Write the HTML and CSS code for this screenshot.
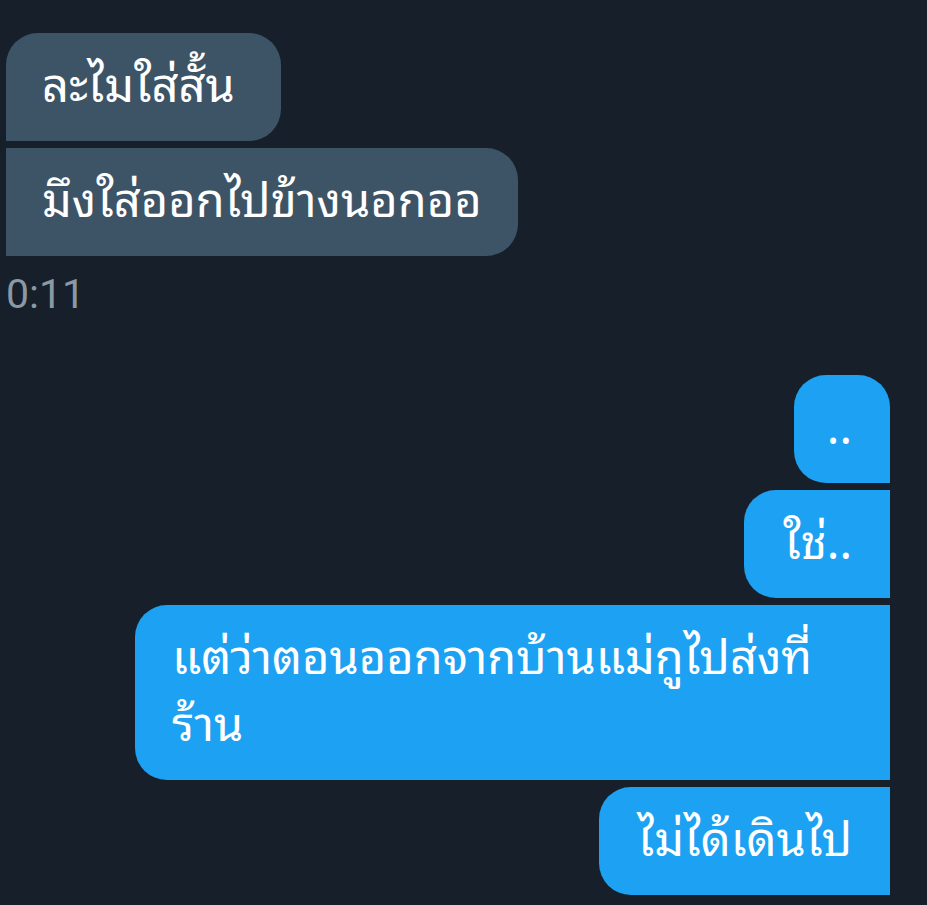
FILE: index.html
```html
<!DOCTYPE html>
<html lang="th">
<head>
<meta charset="utf-8">
<title>DM</title>
<link rel="stylesheet" href="styles.css">
</head>
<body>
<div class="chat">
  <div class="group in">
    <div class="bubble first">ละไมใส่สั้น</div>
    <div class="bubble last">มึงใส่ออกไปข้างนอกออ</div>
    <div class="time">0:11</div>
  </div>
  <div class="group out">
    <div class="bubble first">..</div>
    <div class="bubble">ใช่..</div>
    <div class="bubble wide">แต่ว่าตอนออกจากบ้านแม่กูไปส่งที่<br>ร้าน</div>
    <div class="bubble">ไม่ได้เดินไป</div>
  </div>
</div>
</body>
</html>
```
FILE: styles.css
```css
html, body {
  margin: 0;
  padding: 0;
  background: #17202a;
}
body {
  width: 927px;
  height: 905px;
  overflow: hidden;
  font-family: Roboto, "Noto Sans Thai Looped", "Noto Sans Thai", sans-serif;
  color: #ffffff;
}
.chat {
  display: flex;
  flex-direction: column;
  padding: 33px 37px 0 6px;
}
.group {
  display: flex;
  flex-direction: column;
  gap: 7px;
}
.group.in {
  align-items: flex-start;
}
.group.out {
  align-items: flex-end;
  margin-top: 57px;
}
.bubble {
  font-family: "Noto Sans Thai Looped", Roboto, sans-serif;
  font-size: 47px;
  line-height: 67px;
  padding: 14px 46px 27px 36px;
}
.in .bubble {
  background: #3d5466;
  border-radius: 0 32px 32px 0;
}
.in .bubble.first {
  border-radius: 32px 32px 32px 0;
}
.in .bubble.last {
  padding-right: 36px;
}
.out .bubble {
  background: #1da1f2;
  border-radius: 32px 0 0 32px;
  padding-left: 39px;
  padding-right: 38px;
}
.out .bubble.first {
  border-radius: 32px 32px 0 32px;
  padding-left: 33px;
}
.bubble.wide {
  width: 755px;
  box-sizing: border-box;
  padding-left: 37px;
}
.time {
  font-family: Roboto, sans-serif;
  font-size: 41px;
  line-height: 48px;
  color: #8b98a5;
  margin-top: 7px;
}
```
